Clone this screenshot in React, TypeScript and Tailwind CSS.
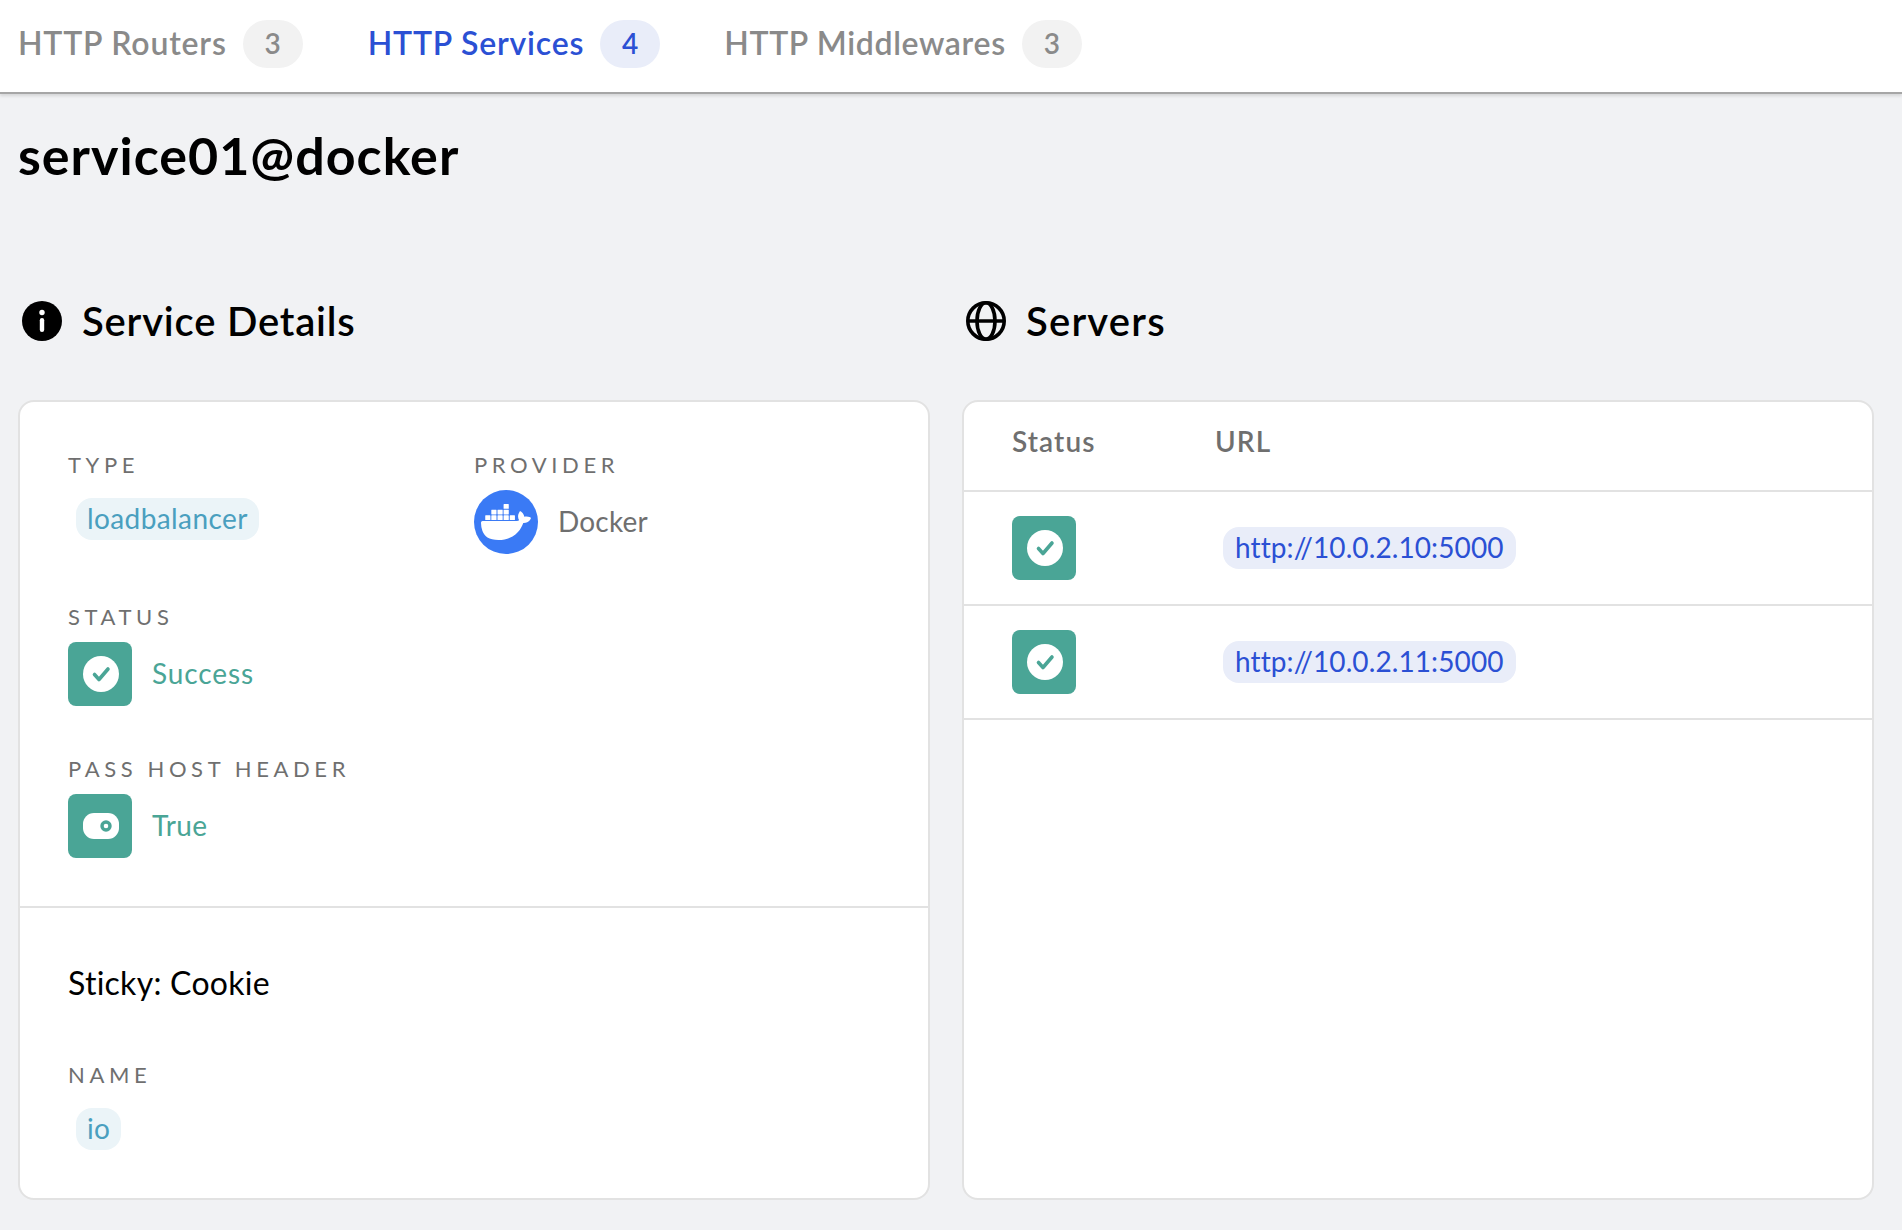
import React from "react";
import { SiDocker } from "react-icons/si";

function Tab({ label, count, active, className, track }: { label: string; count: number; active?: boolean; className: string; track: string }) {
  return (
    <div className={`flex items-center ${className}`}>
      <span className={`mb-[2px] text-[32px] font-semibold leading-none ${track} ${active ? "text-[#2b50d4]" : "text-[#8a8a8a]"}`}>{label}</span>
      <span className={`ml-4 flex h-12 w-[60px] items-center justify-center rounded-3xl pb-[2px] text-[28px] font-semibold ${active ? "bg-[#e9edf9] text-[#2b50d4]" : "bg-[#f2f2f2] text-[#8a8a8a]"}`}>{count}</span>
    </div>
  );
}

function Label({ children }: { children: React.ReactNode }) {
  return <div className="h-[26px] text-[22px] leading-[26px] tracking-[4.6px] text-[#6f6f6f] uppercase">{children}</div>;
}

function CheckTile() {
  return (
    <div className="flex h-16 w-16 items-center justify-center rounded-lg bg-[#4aa596]">
      <svg width="36" height="36" viewBox="0 0 36 36" className="ml-[2px]">
        <circle cx="18" cy="18" r="18" fill="#fff" />
        <path d="M11.5 18.5l4.5 5 9-10.5" fill="none" stroke="#4aa596" strokeWidth="3.6" strokeLinecap="round" strokeLinejoin="round" />
      </svg>
    </div>
  );
}

function ToggleTile() {
  return (
    <div className="flex h-16 w-16 items-center justify-center rounded-lg bg-[#4aa596]">
      <svg width="36" height="26" viewBox="0 0 36 26" className="ml-[2px]">
        <rect width="36" height="26" rx="11" fill="#fff" />
        <circle cx="23" cy="13" r="4" fill="none" stroke="#4aa596" strokeWidth="3.4" />
      </svg>
    </div>
  );
}

function CyanChip({ children }: { children: React.ReactNode }) {
  return <span className="ml-2 inline-flex h-[42px] items-center rounded-2xl bg-[#ebf4f8] px-[11px] pb-[2px] text-[28px] tracking-[0.4px] text-[#4a9fbf]">{children}</span>;
}

function ServerRow({ url }: { url: string }) {
  return (
    <div className="flex h-[114px] items-center border-b-2 border-[#e2e2e2] pl-[48px]">
      <div className="w-[203px]"><CheckTile /></div>
      <span className="ml-2 inline-flex h-[42px] items-center rounded-2xl bg-[#e9edf9] px-3 pb-[2px] text-[28px] tracking-[0.1px] text-[#2b50d4]">{url}</span>
    </div>
  );
}

export default function App() {
  return (
    <div className="h-[1230px] w-[1902px] overflow-hidden bg-[#f1f2f4] font-['Lato','Noto_Sans',sans-serif] text-black">
      <header className="flex h-[94px] items-center border-b-2 border-[#a6a6a6] bg-white pb-[4px] pl-[18px] shadow-[0_2px_3px_rgba(0,0,0,0.12)]">
        <Tab label="HTTP Routers" count={3} className="mr-[65px]" track="tracking-[0.8px]" />
        <Tab label="HTTP Services" count={4} active className="mr-[64px]" track="tracking-[0.8px]" />
        <Tab label="HTTP Middlewares" count={3} className="" track="tracking-[0.65px]" />
      </header>

      <div className="pl-[18px] pr-[28px]">
        <h1 className="mt-[29px] h-[64px] text-[52px] leading-[64px] font-bold tracking-[1px]">service01@docker</h1>

        <div className="mt-[104px] grid grid-cols-[912px_912px] gap-x-[32px]">
          <div className="flex h-[60px] items-center pl-1">
            <svg width="40" height="40" viewBox="0 0 40 40">
              <circle cx="20" cy="20" r="20" fill="#000" />
              <circle cx="20" cy="11.5" r="2.7" fill="#fff" />
              <rect x="17.8" y="17" width="4.4" height="14" rx="2.2" fill="#fff" />
            </svg>
            <h2 className="ml-5 text-[40px] font-semibold leading-none tracking-[0.8px]">Service Details</h2>
          </div>
          <div className="flex h-[60px] items-center pl-1">
            <svg width="40" height="40" viewBox="0 0 40 40" fill="none" stroke="#000" strokeWidth="3.6">
              <circle cx="20" cy="20" r="18.2" />
              <ellipse cx="20" cy="20" rx="9" ry="18.2" />
              <path d="M2 20h36" />
            </svg>
            <h2 className="ml-5 text-[40px] font-semibold leading-none tracking-[1.2px]">Servers</h2>
          </div>

          <section className="mt-[49px] flex h-[800px] flex-col rounded-2xl border-2 border-[#e2e2e2] bg-white">
            <div className="h-[506px] border-b-2 border-[#e2e2e2] pt-[50px] pl-[48px]">
              <div className="flex">
                <div className="w-[406px]">
                  <Label>Type</Label>
                  <div className="mt-[20px]"><CyanChip>loadbalancer</CyanChip></div>
                </div>
                <div>
                  <Label>Provider</Label>
                  <div className="mt-[12px] flex items-center">
                    <div className="flex h-16 w-16 items-center justify-center rounded-full bg-[#3a7af5] text-white">
                      <SiDocker size={50} />
                    </div>
                    <span className="mb-[2px] ml-5 text-[28px] tracking-[0.2px] text-[#6f6f6f]">Docker</span>
                  </div>
                </div>
              </div>
              <div className="mt-[50px]">
                <Label>Status</Label>
                <div className="mt-[12px] flex items-center">
                  <CheckTile />
                  <span className="mb-[2px] ml-5 text-[28px] tracking-[0.9px] text-[#4aa596]">Success</span>
                </div>
              </div>
              <div className="mt-[50px]">
                <Label>Pass Host Header</Label>
                <div className="mt-[12px] flex items-center">
                  <ToggleTile />
                  <span className="mb-[2px] ml-5 text-[28px] tracking-[0.3px] text-[#4aa596]">True</span>
                </div>
              </div>
            </div>
            <div className="pt-[55px] pl-[48px]">
              <div className="h-[40px] text-[32px] leading-[40px] tracking-[0.26px]">Sticky: Cookie</div>
              <div className="mt-[59px]"><Label>Name</Label></div>
              <div className="mt-[20px]"><CyanChip>io</CyanChip></div>
            </div>
          </section>

          <section className="mt-[49px] h-[800px] rounded-2xl border-2 border-[#e2e2e2] bg-white">
            <div className="flex h-[90px] items-center border-b-2 border-[#e2e2e2] pb-[10px] pl-[48px] text-[28px] font-semibold tracking-[1.1px] text-[#6f6f6f]">
              <span className="w-[203px]">Status</span>
              <span>URL</span>
            </div>
            <ServerRow url="http://10.0.2.10:5000" />
            <ServerRow url="http://10.0.2.11:5000" />
          </section>
        </div>
      </div>
    </div>
  );
}
